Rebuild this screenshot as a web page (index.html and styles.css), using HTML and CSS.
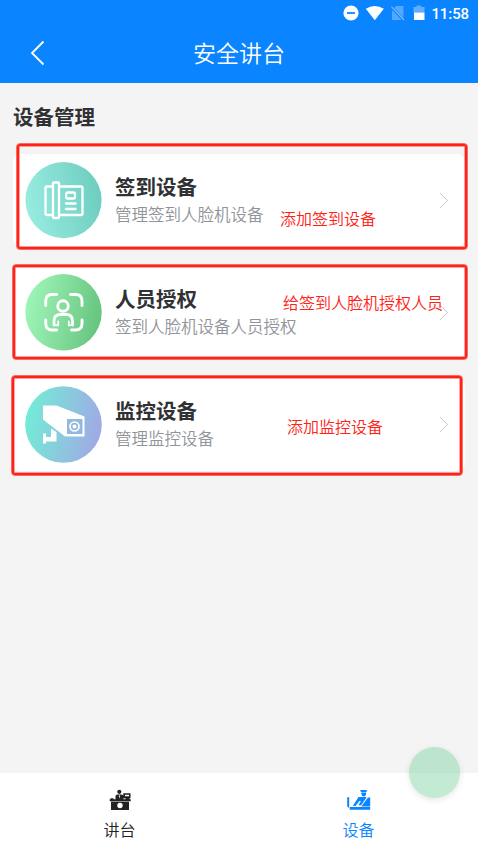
FILE: index.html
```html
<!DOCTYPE html>
<html lang="zh-CN">
<head>
<meta charset="utf-8">
<title>安全讲台</title>
<link rel="stylesheet" href="styles.css">
</head>
<body>
<div class="app">
  <header class="header">
    <div class="status">
      <svg class="status-icons" width="86" height="18" viewBox="0 0 86 18">
        <circle cx="8" cy="9" r="7.6" fill="#fff"/>
        <path d="M4 9h8" stroke="#0b84ff" stroke-width="1.8"/>
        <path d="M22.800 4.700Q31.800-.9 40.800 4.700L31.800 16.300Z" fill="#fff"/>
        <path d="M53 2h7.500v14H49V7Z" fill="#fff" opacity=".3"/>
        <path d="M48.500 3 61 16.500" stroke="#0b84ff" stroke-width="3"/>
        <path d="M48.500 2.700 61 16" stroke="#fff" stroke-width="1.200" opacity=".45"/>
        <path d="M73.500 1.500h4.500v1.500h3.500v5.500h-11v-5.500h3z" fill="#fff" opacity=".35"/>
        <path d="M71 8.500h10.500v7.500h-10.500z" fill="#fff"/>
      </svg>
      <span class="time">11:58</span>
    </div>
    <div class="navbar">
      <svg class="back" width="16" height="26" viewBox="0 0 16 26"><path d="M13.500 1.500 2 13l11.500 11.500" fill="none" stroke="#fff" stroke-width="1.800"/></svg>
      <h1>安全讲台</h1>
    </div>
  </header>

  <main class="content">
    <h2>设备管理</h2>
    <section class="card">
      <svg class="avatar" viewBox="0 0 77 77">
        <defs><linearGradient id="g1" x1="0" y1=".6" x2="1" y2=".4"><stop stop-color="#98ece0"/><stop offset="1" stop-color="#6ecdc0"/></linearGradient></defs>
        <circle cx="38.500" cy="38.100" r="38.100" fill="url(#g1)"/>
        <g fill="none" stroke="#fff" stroke-width="2.300" stroke-linecap="round" stroke-linejoin="round">
          <path d="M27.500 24.500h-5.500q-1.500 0-1.500 1.500v25.500q0 1.500 1.500 1.500h5.500"/>
          <rect x="28" y="20.500" width="6" height="35.500" rx="1"/>
          <path d="M34.500 24.500h21.500q1.500 0 1.500 1.500v25.500q0 1.500-1.500 1.500h-21.500"/>
          <rect x="41.200" y="30.500" width="8.800" height="6" rx="1.500"/>
          <path d="M41 41.500h9.500M41 47h9.500"/>
        </g>
      </svg>
      <div class="text"><h3>签到设备</h3><p>管理签到人脸机设备</p></div>
      <svg class="arrow" viewBox="0 0 10 17"><path d="M1 1l7.500 7.500L1 16"/></svg>
      <div class="frame frame-one"></div>
      <span class="note note-one">添加签到设备</span>
    </section>
    <section class="card">
      <svg class="avatar" viewBox="0 0 77 77">
        <defs><linearGradient id="g2" x1="0" y1=".4" x2="1" y2=".6"><stop stop-color="#9ff5b9"/><stop offset="1" stop-color="#66c47e"/></linearGradient></defs>
        <circle cx="38.500" cy="38.200" r="38.200" fill="url(#g2)"/>
        <g fill="none" stroke="#fff" stroke-width="2.900" stroke-linecap="round">
          <path d="M20.700 31.500v-4.500q0-6.500 6.500-6.500h4.500M45.500 20.500h5q6.500 0 6.500 6.500v4.500M57 46v3.500q0 6.500-6.500 6.500h-4M31.700 56h-4.500q-6.500 0-6.500-6.500v-3.500"/>
          <circle cx="38" cy="32" r="5.300"/>
          <path d="M29 51v-4q0-6.500 6.500-6.500h5.500q6.500 0 6.500 6.500v4"/>
          <path d="M33.200 47.500v4M43.800 47.500v4M29.500 51.200h3M44.500 51.200h2.500" stroke-width="1.800"/>
        </g>
      </svg>
      <div class="text"><h3>人员授权</h3><p>签到人脸机设备人员授权</p></div>
      <svg class="arrow" viewBox="0 0 10 17"><path d="M1 1l7.500 7.500L1 16"/></svg>
      <div class="frame frame-two"></div>
      <span class="note note-two">给签到人脸机授权人员</span>
    </section>
    <section class="card">
      <svg class="avatar" viewBox="0 0 77 77">
        <defs><linearGradient id="g3" x1="0" y1=".4" x2="1" y2=".6"><stop stop-color="#72edd6"/><stop offset="1" stop-color="#a1a8e5"/></linearGradient></defs>
        <circle cx="38.500" cy="38.500" r="38.300" fill="url(#g3)"/>
        <path d="M18 19.500h13.500l28 11v20h-19.500L18 33.500Z" fill="#fff"/>
        <path d="M42 33h15.500v15h-15.500z" fill="#92b9df"/>
        <circle cx="49.500" cy="40.500" r="4.500" fill="none" stroke="#fff" stroke-width="1.700"/>
        <circle cx="49.500" cy="40.500" r="2" fill="#fff"/>
        <path d="M18 47.500h3v3.500h5v-8.500l5.500 3.500v9.500h-10.500v2h-3z" fill="#fff"/>
      </svg>
      <div class="text"><h3>监控设备</h3><p>管理监控设备</p></div>
      <svg class="arrow" viewBox="0 0 10 17"><path d="M1 1l7.500 7.500L1 16"/></svg>
      <div class="frame frame-three"></div>
      <span class="note note-three">添加监控设备</span>
    </section>
  </main>

  <nav class="tabs">
    <div class="tab">
      <svg width="22" height="22" viewBox="0 0 22 22" fill="#222">
        <circle cx="10.300" cy="2.800" r="2.100"/>
        <path d="M6.500 11V7.500q0-2 2-2h4q2 0 2 2V11zM1.500 9.200h3v1.500h-3zM14.300 4.200h7.200v5h-7.200zM16.500 9h4v2.500h-4zM.700 10.200h21v2H.700zM2 12.800h18v8.200H2z"/>
        <path d="M16 5.800h4v1.500h-4zM9.700 6.500h1.500l-.7 3z" fill="#fff"/>
        <circle cx="11" cy="16.500" r="2.700" fill="#fff"/>
      </svg>
      <span>讲台</span>
    </div>
    <div class="tab active">
      <svg width="24" height="22" viewBox="0 0 24 22" fill="#0b84ff">
        <path d="M13.200 1h6.800l-.8 2.200h-5.200zM14.200 3.800h5q0 3.700-2.400 3.700T14.200 3.800zM11.500 8h8.300L14 16.500l-2.500-.5 2.500-4h-1.500L8.500 17H5.800zM21 8.500h2.200v9h-9zM2.700 18h20.500v2.800H2.700z"/>
        <path d="M1.200 8.200v8.500q0 1 1 1" fill="none" stroke="#0b84ff" stroke-width="2"/>
      </svg>
      <span>设备</span>
    </div>
  </nav>
  <div class="float-button"></div>
</div>
</body>
</html>
```
FILE: styles.css
```css
* { box-sizing: border-box; }
body, h1, h2, h3, p { margin: 0; }
body { font-family: "Noto Sans CJK SC", sans-serif; background: #f4f4f4; color: #303133; }
.app { position: relative; height: 851px; display: flex; flex-direction: column; overflow: hidden; }
.header { height: 83px; background: #0b84ff; color: #fff; }
.status { height: 26px; display: flex; justify-content: flex-end; align-items: center; gap: 2px; padding-right: 9px; }
.time { font: 500 15px/26px Roboto, sans-serif; letter-spacing: -.1px; padding-top: 1px; }
.navbar { height: 54px; display: grid; grid-template-columns: 60px 1fr 60px; align-items: center; }
.back { margin-left: 30px; }
.navbar h1 { font-size: 23px; line-height: 34px; font-weight: 350; text-align: center; margin-top: -2px; }
.content { flex: 1; padding: 18px 13px 0; display: flex; flex-direction: column; }
.content h2 { font-size: 20.500px; line-height: 30px; font-weight: 700; margin-bottom: 23px; }
.card { position: relative; height: 92px; margin-bottom: 20.400px; background: #fff; border-radius: 8px; display: flex; align-items: center; padding: 0 16px 0 12px; }
.avatar { width: 77px; height: 77px; flex: none; }
.text { flex: 1; margin-left: 13px; }
.text h3 { font-size: 20.500px; line-height: 28px; font-weight: 700; margin-top: -1px; }
.text p { font-size: 16.500px; line-height: 28px; font-weight: 350; color: #909399; }
.arrow { width: 10px; height: 17px; fill: none; stroke: #c5c7ce; stroke-width: 1; }
.frame { position: absolute; border: 1px solid rgba(255, 34, 22, .65); border-radius: 4px; box-shadow: inset 0 0 0 2px #ff2216, inset 0 0 0 3px rgba(255, 34, 22, .4); }
.frame-one { left: 3px; right: -3px; top: -11px; bottom: -4px; }
.frame-two { left: -1px; right: -3px; top: -2px; bottom: -2px; }
.frame-three { left: -2px; right: 2px; top: -4px; bottom: -5px; }
.note { position: absolute; font-size: 16px; line-height: 24px; font-weight: 350; color: #ff2216; white-space: nowrap; }
.note-one { left: 267px; top: 52px; }
.note-two { left: 270px; top: 24px; }
.note-three { left: 274px; top: 35px; }
.tabs { height: 78px; background: #fff; display: flex; }
.tab { flex: 1; display: flex; flex-direction: column; align-items: center; padding-top: 16px; font-size: 16px; line-height: 24px; font-weight: 350; color: #222; }
.tab span { margin-top: 6px; }
.tab.active { color: #0b84ff; }
.float-button { position: absolute; left: 409px; top: 747px; width: 51px; height: 51px; border-radius: 50%; background: rgba(130, 211, 163, .48); box-shadow: 0 2px 6px rgba(0, 0, 0, .1); }
```
